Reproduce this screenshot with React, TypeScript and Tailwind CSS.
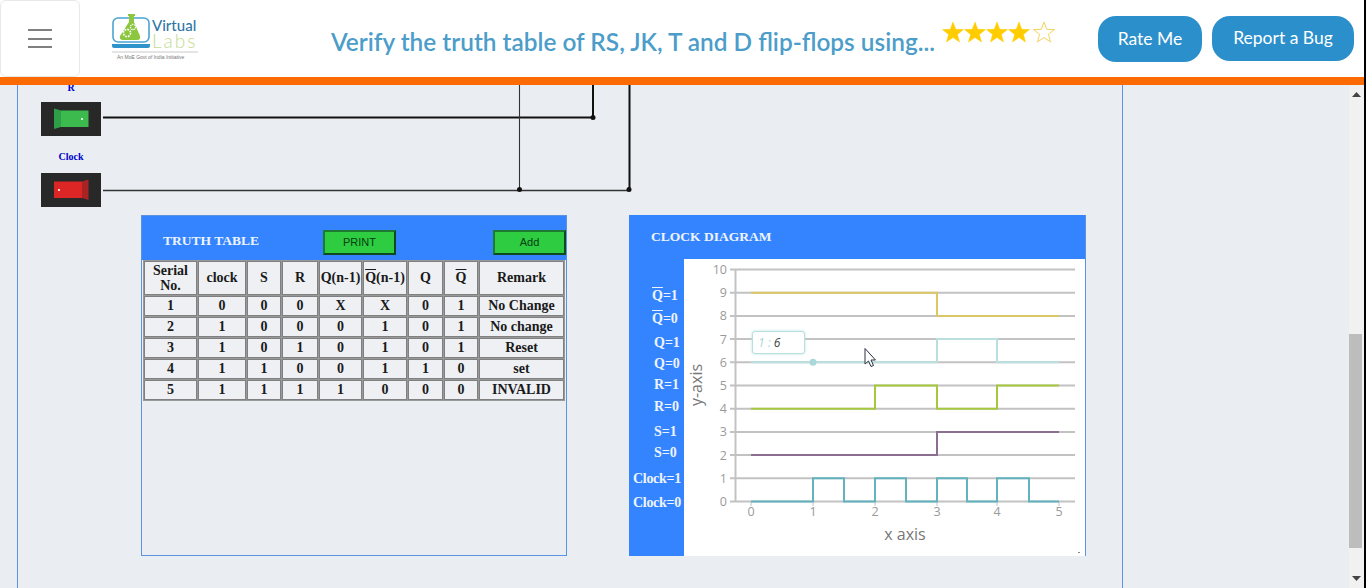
const F = "[font-family:'Liberation_Serif',serif]";

const columns = [
  { label: "Serial No.", width: "w-[53px]" },
  { label: "clock", width: "w-[48px]" },
  { label: "S", width: "w-[34px]" },
  { label: "R", width: "w-[36px]" },
  { label: "Q(n-1)", width: "w-[43px]" },
  { label: "(n-1)", bar: true, width: "w-[44px]" },
  { label: "Q", width: "w-[35px]" },
  { label: "", bar: true, width: "w-[34px]" },
  { label: "Remark", width: "w-[85px]" },
];

const rows = [
  ["1", "0", "0", "0", "X", "X", "0", "1", "No Change"],
  ["2", "1", "0", "0", "0", "1", "0", "1", "No change"],
  ["3", "1", "0", "1", "0", "1", "0", "1", "Reset"],
  ["4", "1", "1", "0", "0", "1", "1", "0", "set"],
  ["5", "1", "1", "1", "1", "0", "0", "0", "INVALID"],
];

const sideLabels = [
  { text: "=1", bar: true, cls: "mt-[27px] pl-[23px]" },
  { text: "=0", bar: true, cls: "mt-[3px] pl-[23px]" },
  { text: "Q=1", cls: "mt-[4px] pl-[25px]" },
  { text: "Q=0", cls: "mt-[1px] pl-[25px]" },
  { text: "R=1", cls: "mt-[1px] pl-[25px]" },
  { text: "R=0", cls: "mt-[2px] pl-[25px]" },
  { text: "S=1", cls: "mt-[5px] pl-[25px]" },
  { text: "S=0", cls: "mt-[1px] pl-[25px]" },
  { text: "Clock=1", cls: "mt-[6px] pl-[4px] tracking-[-0.3px]" },
  { text: "Clock=0", cls: "mt-[4px] pl-[4px] tracking-[-0.3px]" },
];

const y = (v: number) => 501.5 - 23.2 * v;

const traces = [
  { color: "#dcc766", d: `M751 ${y(9)}H937V${y(8)}H1059` },
  { color: "#b9dfdf", d: `M751 ${y(6)}H937V${y(7)}H997V${y(6)}H1059` },
  { color: "#a6c83f", d: `M751 ${y(4)}H875V${y(5)}H937V${y(4)}H997V${y(5)}H1059` },
  { color: "#8c6f90", d: `M751 ${y(2)}H937V${y(3)}H1059` },
  {
    color: "#62b2c0",
    d: `M751 ${y(0)}H813V${y(1)}H844V${y(0)}H875V${y(1)}H906V${y(0)}H937V${y(1)}H967V${y(0)}H997V${y(1)}H1029V${y(0)}H1059`,
  },
];

function Star({ x, filled }: { x: number; filled: boolean }) {
  const pts = [];
  for (let i = 0; i < 10; i++) {
    const r = i % 2 === 0 ? 11 : 4.6;
    const a = (Math.PI / 5) * i - Math.PI / 2;
    pts.push(`${(x + r * Math.cos(a)).toFixed(1)},${(12 + r * Math.sin(a)).toFixed(1)}`);
  }
  return (
    <polygon
      points={pts.join(" ")}
      fill={filled ? "#ffcc00" : "#fff"}
      stroke={filled ? "#ffcc00" : "#f2d35c"}
      strokeWidth={filled ? 0.5 : 1}
    />
  );
}

function Logo() {
  return (
    <svg width="90" height="50" viewBox="0 0 90 50" className="shrink-0">
      <rect x="2" y="5" width="36" height="24" rx="5" fill="none" stroke="#4aa3d3" strokeWidth="1.6" />
      <path d="M1 31H39V33Q39 35 37 35H3Q1 35 1 33Z" fill="#2f93cc" />
      <path d="M17 1H24V3H23V9L29 23Q30 27 26 27H12Q8 27 9 23L18 9V3H17Z" fill="#8dc63f" />
      <circle cx="16" cy="20" r="3.6" fill="none" stroke="#fff" strokeWidth="1.6" strokeDasharray="1.8 1" />
      <circle cx="22" cy="14" r="2.6" fill="none" stroke="#fff" strokeWidth="1.2" strokeDasharray="1.4 0.8" />
      <text x="41" y="18" fontFamily="'Lato', sans-serif" fontSize="15" fontWeight="500" fill="#2f76a6">
        Virtual
      </text>
      <text x="41" y="35" fontFamily="'Lato', sans-serif" fontSize="19" fontWeight="300" letterSpacing="2" fill="#c3dc92">
        Labs
      </text>
      <line x1="1" y1="39" x2="87" y2="39" stroke="#c9c9c9" />
      <text x="6" y="46" fontFamily="'Liberation Sans', sans-serif" fontSize="5" fill="#777">
        An MoE Govt of India Initiative
      </text>
    </svg>
  );
}

function Toggle({ on }: { on: boolean }) {
  return (
    <svg width="60" height="34" viewBox="0 0 60 34" className="block">
      <rect width="60" height="34" fill="#282828" />
      {on ? (
        <g>
          <path d="M13 6.5L20 8.5V25L13 27Z" fill="#2e9f48" />
          <rect x="20" y="8.5" width="27.5" height="16.5" fill="#3cba4e" />
          <rect x="40" y="16" width="2" height="2" fill="#d6f5da" />
        </g>
      ) : (
        <g>
          <rect x="13" y="8.5" width="28" height="16.5" fill="#dc2626" />
          <path d="M41 8.5L47.5 6.5V27L41 25Z" fill="#a82424" />
          <rect x="17" y="16" width="2" height="2" fill="#fbd5d5" />
        </g>
      )}
    </svg>
  );
}

function BarQ() {
  return <span className="overline decoration-1">Q</span>;
}

function Chart() {
  const gridColor = "#c2c2c2";
  return (
    <svg viewBox="684 259 401 297" width="401" height="297" className="block">
      {Array.from({ length: 11 }, (_, i) => (
        <g key={i}>
          <line x1="730" x2="1075" y1={y(i)} y2={y(i)} stroke={gridColor} strokeWidth="2" />
          <text x="727" y={y(i) + 4.5} textAnchor="end" fontSize="12.5" fill="#9a9a9a" fontFamily="'Open Sans', sans-serif">
            {i}
          </text>
        </g>
      ))}
      <line x1="735.5" x2="735.5" y1="269" y2="502" stroke={gridColor} strokeWidth="2" />
      {[751, 813, 875, 937, 997, 1059].map((tx, i) => (
        <g key={tx}>
          <line x1={tx} x2={tx} y1="502" y2="506" stroke={gridColor} />
          <text x={tx} y="516" textAnchor="middle" fontSize="12.5" fill="#9a9a9a" fontFamily="'Open Sans', sans-serif">
            {i}
          </text>
        </g>
      ))}
      {traces.map((t) => (
        <path key={t.color} d={t.d} fill="none" stroke={t.color} strokeWidth="2" />
      ))}
      <circle cx="813" cy={y(6)} r="3.5" fill="#a9d8d8" />
      <text x="905" y="540" textAnchor="middle" fontSize="16" fill="#777" fontFamily="'Open Sans', sans-serif">
        x axis
      </text>
      <text
        transform="translate(702 385) rotate(-90)"
        textAnchor="middle"
        fontSize="16"
        fill="#777"
        fontFamily="'Open Sans', sans-serif"
      >
        y-axis
      </text>
      <path
        d="M865 348.5V364L868.5 361L871 366.5L873.5 365.5L871 360H875.5Z"
        fill="#fff"
        stroke="#2a3040"
        strokeWidth="1"
      />
      <line x1="1078" x2="1080" y1="552.5" y2="552.5" stroke="#888" />
    </svg>
  );
}

export default function App() {
  return (
    <div className="flex h-[588px] w-[1366px] overflow-hidden bg-black">
      <div className="flex w-[1364px] shrink-0 flex-col bg-[#eaeef3]">
        {/* Header */}
        <header className="flex h-[85px] shrink-0 items-start border-b-[8px] border-[#fc6a03] bg-white">
          <button className="flex h-[77px] w-[80px] shrink-0 flex-col items-center justify-center gap-[6.5px] rounded-[6px] border border-[#e8e8e8]">
            <span className="h-[2px] w-[24px] bg-[#808080]" />
            <span className="h-[2px] w-[24px] bg-[#808080]" />
            <span className="h-[2px] w-[24px] bg-[#808080]" />
          </button>
          <div className="ml-[31px] mt-[13px]">
            <Logo />
          </div>
          <div className="ml-[130px] mt-[25px] w-[606px] whitespace-nowrap text-[24.4px] leading-[34px] font-semibold text-[#4c9dc9] [font-family:'Lato',sans-serif]">
            Verify the truth table of RS, JK, T and D flip-flops using...
          </div>
          <svg width="118" height="26" viewBox="941 0 118 26" className="ml-[4px] mt-[21px] shrink-0">
            <Star x={953} filled />
            <Star x={975} filled />
            <Star x={997} filled />
            <Star x={1019} filled />
            <Star x={1044} filled={false} />
          </svg>
          <button className="ml-[39px] mt-[16px] h-[46px] w-[104px] shrink-0 rounded-[18px] bg-[#2b8fcb] text-[17.5px] text-white [font-family:'Lato',sans-serif]">
            Rate Me
          </button>
          <button className="ml-[10px] mt-[16px] h-[45px] w-[142px] shrink-0 rounded-[18px] bg-[#2b8fcb] text-[17.5px] text-white [font-family:'Lato',sans-serif]">
            Report a Bug
          </button>
        </header>

        <div className="flex min-h-0 flex-1">
          {/* Page column */}
          <main className="ml-[17px] h-[503px] w-[1106px] shrink-0 overflow-hidden border-x border-[#5b93e0]">
            {/* Circuit */}
            <div className="relative h-[130px] w-full">
              <div className={`ml-[23px] flex w-[60px] -translate-y-[3px] flex-col items-center font-bold ${F}`}>
                <span className="h-[20px] text-[10px] leading-[12px] text-[#0000cd]">R</span>
                <Toggle on />
                <span className="mt-[15px] h-[22px] text-[10px] leading-[12px] text-[#0000cd]">Clock</span>
                <Toggle on={false} />
              </div>
              <svg viewBox="18 85 1104 130" width="1104" height="130" className="absolute left-0 top-0">
                <path d="M103 117.5H593V85" fill="none" stroke="#111" strokeWidth="2" />
                <path d="M103 190.5H629.5" fill="none" stroke="#333" strokeWidth="1.3" />
                <path d="M519.5 85V190" fill="none" stroke="#333" strokeWidth="1.1" />
                <path d="M629.5 85V190" fill="none" stroke="#111" strokeWidth="2" />
                <circle cx="593" cy="117.5" r="2.5" fill="#111" />
                <circle cx="519.5" cy="189.5" r="2.5" fill="#111" />
                <circle cx="629" cy="189.5" r="2.5" fill="#111" />
              </svg>
            </div>

            <div className="flex items-start">
              {/* Truth table */}
              <section className="ml-[123px] h-[341px] w-[426px] border border-[#5b93e0]">
                <div className={`flex h-[44px] items-center bg-[#3584ff] ${F}`}>
                  <span className="ml-[21px] mt-[6px] w-[160px] text-[13.5px] font-bold text-[#eef4ff]">TRUTH TABLE</span>
                  <button className="mt-[8px] h-[25px] w-[73px] border-2 border-[#1c7a33] border-b-[#10491f] border-r-[#10491f] bg-[#2ecc40] text-[11px] text-[#063d12] [font-family:'Liberation_Sans',sans-serif]">
                    PRINT
                  </button>
                  <button className="ml-[97px] mt-[8px] h-[25px] w-[73px] border-2 border-[#1c7a33] border-b-[#10491f] border-r-[#10491f] bg-[#2ecc40] text-[11px] text-[#063d12] [font-family:'Liberation_Sans',sans-serif]">
                    Add
                  </button>
                </div>
                <table
                  className={`ml-[1px] table-fixed border-separate border-spacing-[1px] bg-[#999] text-center text-[14px] font-bold text-[#1a1a1a] ${F}`}
                >
                  <thead>
                    <tr className="h-[34px]">
                      {columns.map((c) => (
                        <th key={c.width + c.label} className={`${c.width} border border-[#808080] bg-[#eef0f4] p-0 pb-[1px] font-bold leading-[15px]`}>
                          {c.bar && <BarQ />}
                          {c.label}
                        </th>
                      ))}
                    </tr>
                  </thead>
                  <tbody>
                    {rows.map((row) => (
                      <tr key={row[0]} className="h-[20px]">
                        {row.map((cell, i) => (
                          <td key={i} className="border border-[#808080] bg-[#eef0f4] p-0 leading-[16px]">
                            {cell}
                          </td>
                        ))}
                      </tr>
                    ))}
                  </tbody>
                </table>
              </section>

              {/* Clock diagram */}
              <section className={`ml-[62px] h-[341px] w-[457px] border-r border-[#5b93e0] ${F}`}>
                <div className="flex h-[44px] items-center bg-[#3584ff] pl-[22px] text-[13.5px] font-bold text-[#eef4ff]">
                  CLOCK DIAGRAM
                </div>
                <div className="flex h-[297px]">
                  <div className="flex w-[55px] shrink-0 flex-col bg-[#3584ff] text-[14px] font-bold text-[#eef4ff]">
                    {sideLabels.map((l) => (
                      <span key={l.cls + l.text} className={`h-[20px] leading-[20px] ${l.cls}`}>
                        {l.bar && <BarQ />}
                        {l.text}
                      </span>
                    ))}
                  </div>
                  <div className="relative bg-white">
                    <Chart />
                    <div className="absolute left-[68px] top-[72px] flex h-[23px] w-[53px] items-center rounded-[3px] border border-[#b9dfdf] bg-white pl-[5px] text-[12px] italic shadow-[0_0_3px_#b9dfdf] [font-family:'Open_Sans',sans-serif]">
                      <span className="text-[#a9d8d8]">1 :&nbsp;</span>
                      <span className="text-[#444]">6</span>
                    </div>
                  </div>
                </div>
              </section>
            </div>
          </main>

          {/* Scrollbar */}
          <div className="ml-[226px] flex w-[15px] shrink-0 flex-col items-center bg-[#f1f1f1]">
            <svg width="9" height="5" viewBox="0 0 9 5" className="mt-[7px] shrink-0">
              <path d="M0 5L4.5 0L9 5Z" fill="#444" />
            </svg>
            <div className="mt-[237px] h-[214px] w-[13px] shrink-0 self-start bg-[#bdbdbd]" />
            <svg width="9" height="5" viewBox="0 0 9 5" className="mt-[28px] shrink-0">
              <path d="M0 0L4.5 5L9 0Z" fill="#444" />
            </svg>
          </div>
        </div>
      </div>
    </div>
  );
}
